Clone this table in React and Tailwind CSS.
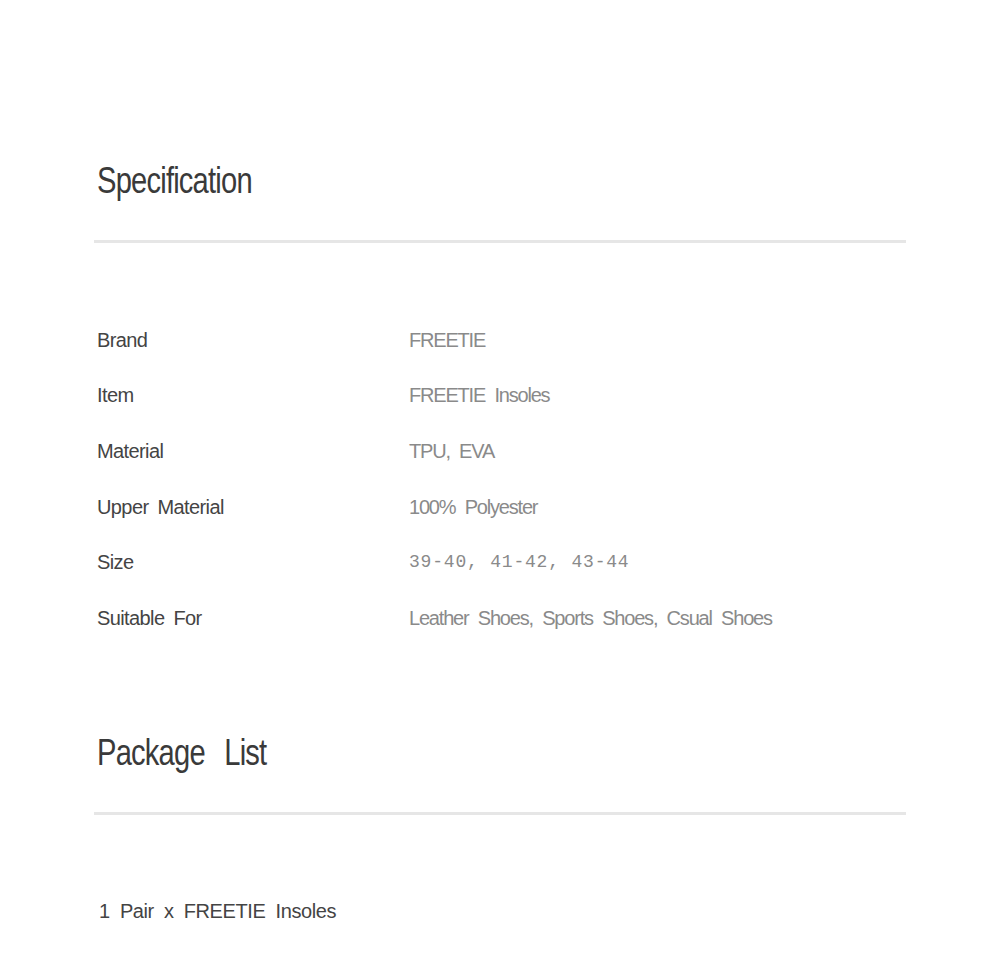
const specs = [
  { label: 'Brand', value: 'FREETIE' },
  { label: 'Item', value: 'FREETIE Insoles' },
  { label: 'Material', value: 'TPU, EVA' },
  { label: 'Upper Material', value: '100% Polyester' },
  { label: 'Size', value: '39-40, 41-42, 43-44', mono: true },
  { label: 'Suitable For', value: 'Leather Shoes, Sports Shoes, Csual Shoes' },
];

const SectionTitle = ({ children, className = '' }) => (
  <div className={`flex pl-[3px] ${className}`}>
    <h2 className="origin-left scale-x-[0.81] whitespace-nowrap text-[36px] leading-[36px] text-[#3a3a3a] tracking-[-1px] [word-spacing:15px]">
      {children}
    </h2>
  </div>
);

const Divider = ({ className = '' }) => <div className={`h-[3px] bg-[#e6e6e6] ${className}`} />;

const App = () => {
  return (
    <div className="w-[1000px] min-h-[968px] bg-white px-[94px] font-['Liberation_Sans',sans-serif]">
      <div className="pt-[163px]">
        {/* Specification */}
        <SectionTitle>Specification</SectionTitle>
        <Divider className="mt-[41px]" />

        <div className="mt-[69px] flex flex-col">
          {specs.map((row) => (
            <div key={row.label} className="flex items-center h-[55.6px]">
              <span className="w-[315px] pl-[3px] text-[20px] text-[#444] tracking-[-0.6px] [word-spacing:4px]">
                {row.label}
              </span>
              {row.mono ? (
                <span className="text-[18px] text-[#8a8a8a] tracking-[0.8px] font-['Liberation_Mono',monospace]">
                  {row.value}
                </span>
              ) : (
                <span className="text-[20px] text-[#8a8a8a] tracking-[-1.2px] [word-spacing:5px]">
                  {row.value}
                </span>
              )}
            </div>
          ))}
        </div>

        {/* Package List */}
        <SectionTitle className="mt-[89px]">Package List</SectionTitle>
        <Divider className="mt-[41px]" />

        <p className="mt-[84px] pl-[5px] text-[20px] leading-[24px] text-[#444] tracking-[-0.4px] [word-spacing:5px]">
          1 Pair x FREETIE Insoles
        </p>
      </div>
    </div>
  );
};

export default App;
